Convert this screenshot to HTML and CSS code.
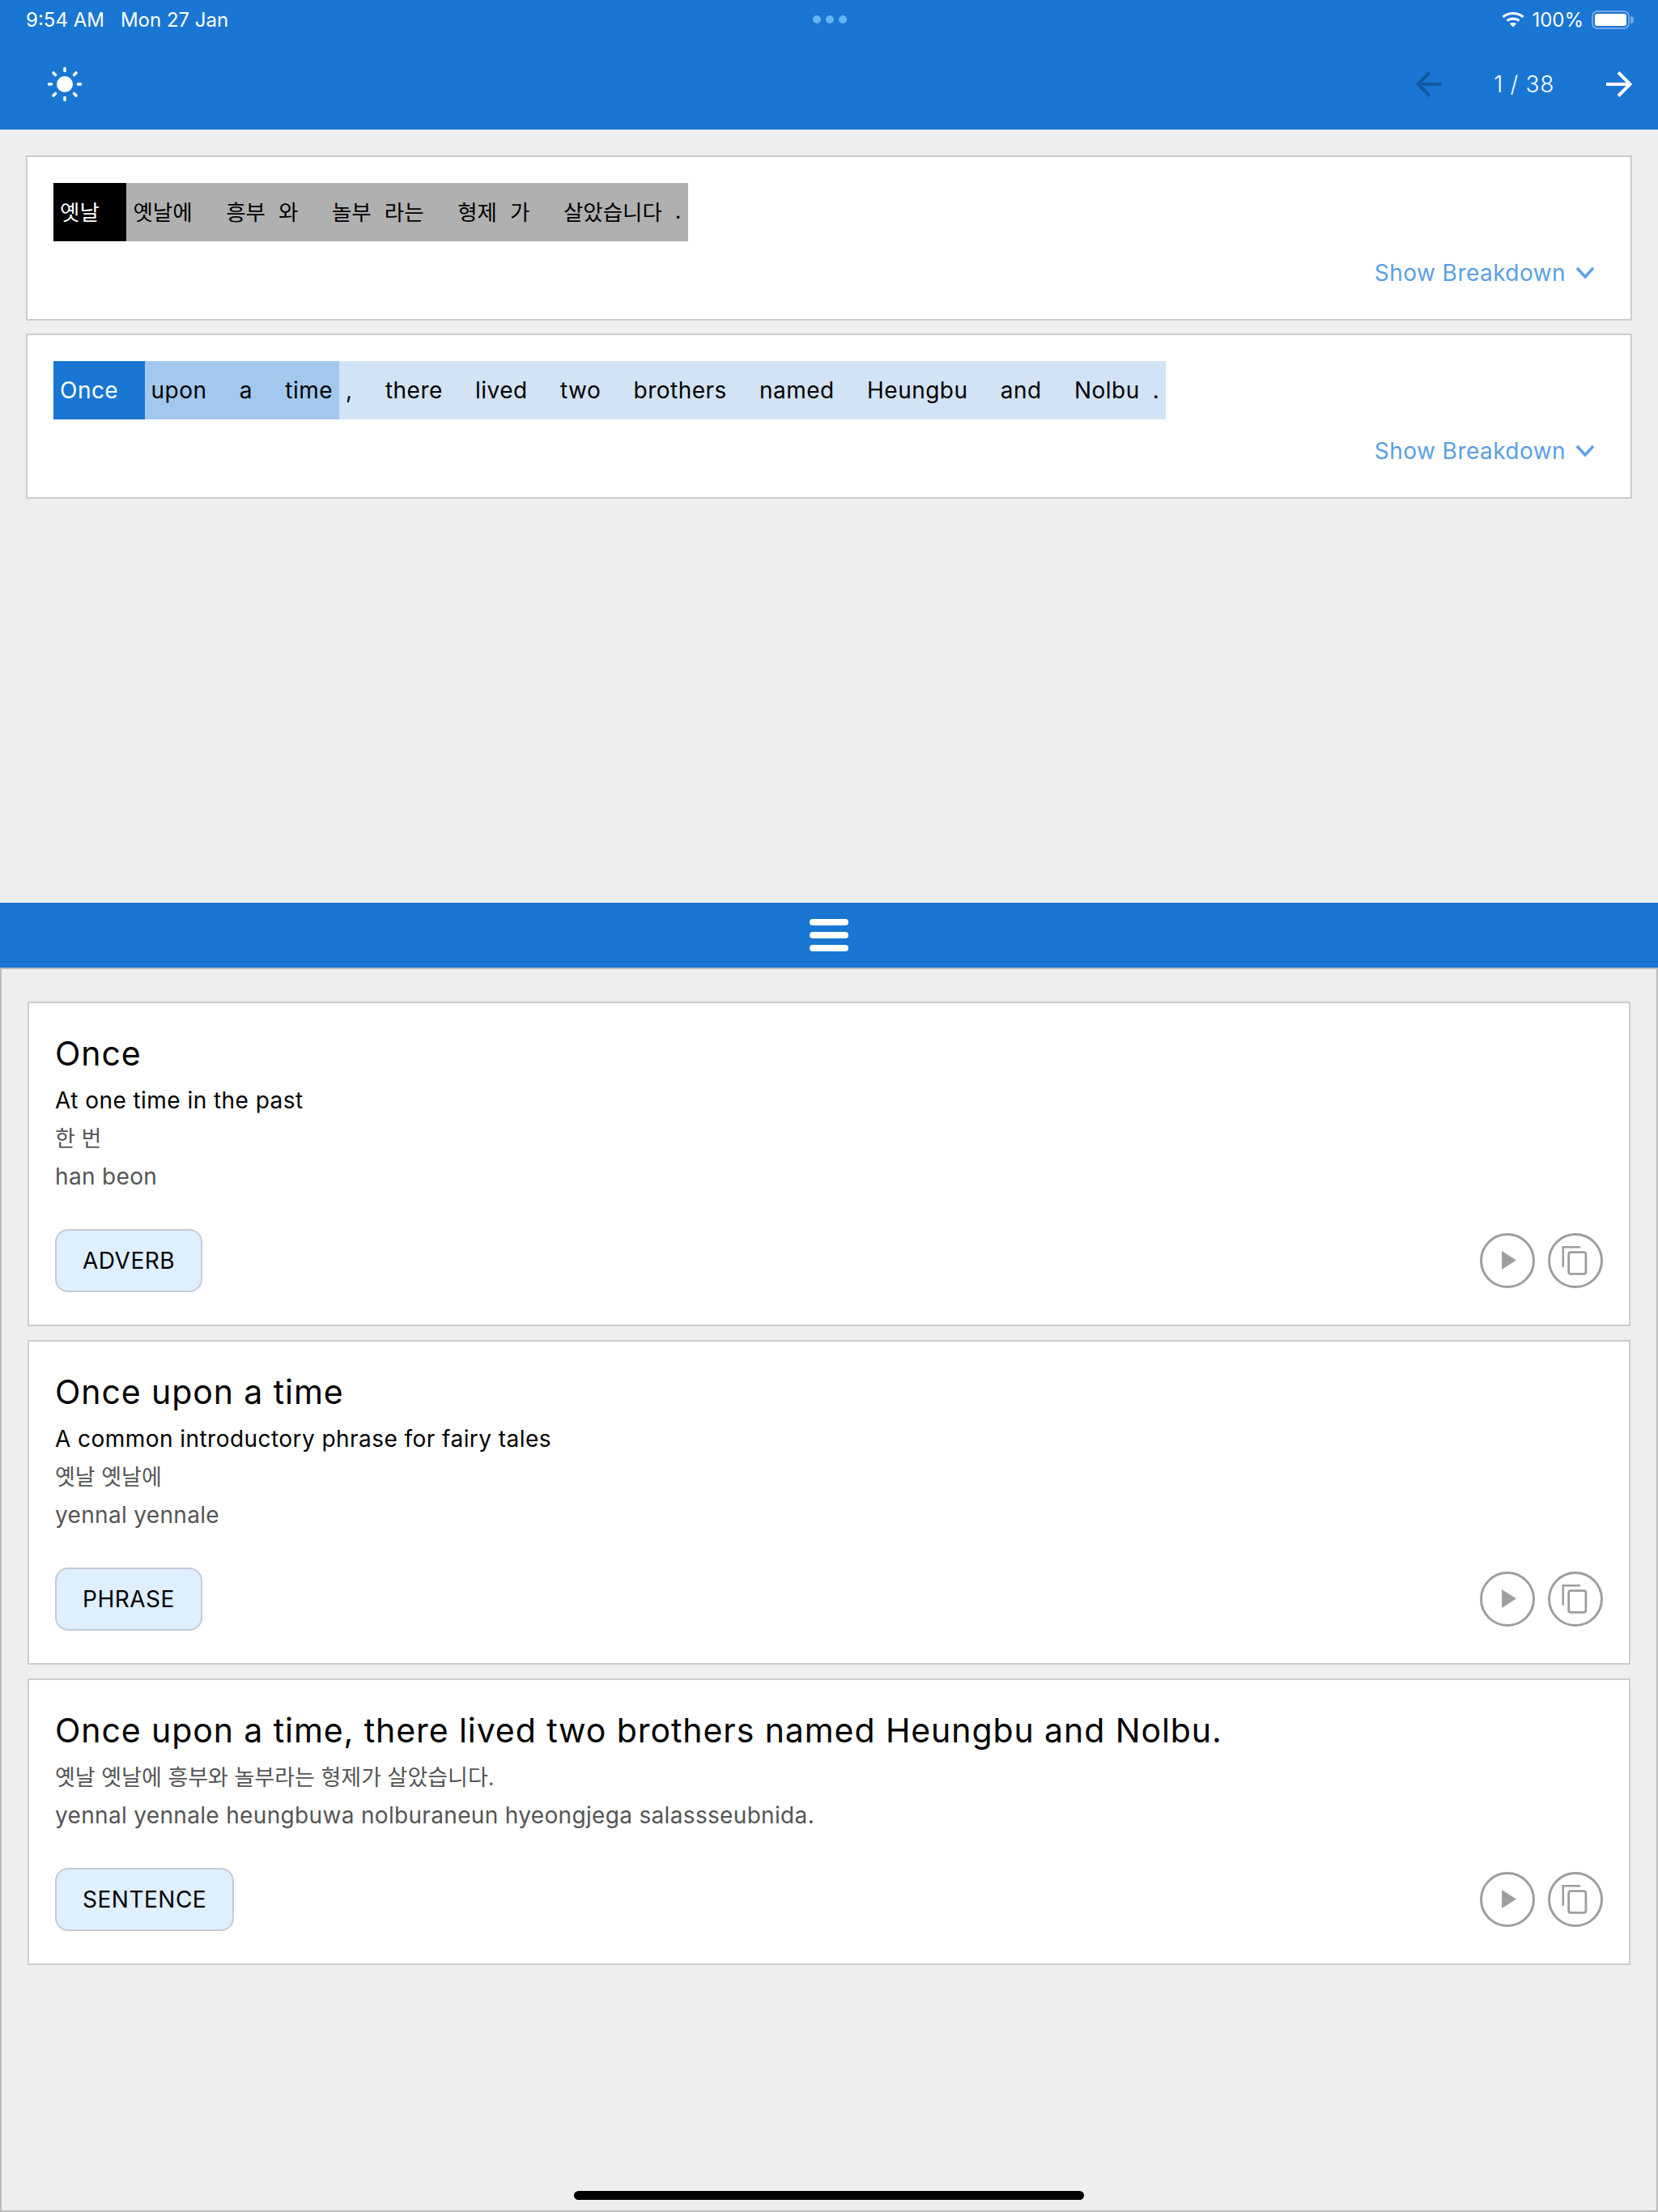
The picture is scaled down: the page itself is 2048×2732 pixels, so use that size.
FILE: index.html
```html
<!DOCTYPE html>
<html lang="ko">
<head>
    <meta charset="UTF-8">
    <title>Story Reader</title>
    <link rel="stylesheet" href="styles.css">
</head>
<body>
    <div class="app">
        <header class="header">
            <div class="status-bar">
                <div class="status-left">
                    <span>9:54 AM</span>
                    <span>Mon 27 Jan</span>
                </div>
                <div class="status-dots"><i></i><i></i><i></i></div>
                <div class="status-right">
                    <svg class="wifi" width="28" height="20" viewBox="0 0 28 20">
                        <path d="M1.5 7C8.500 1 19.500 1 26.500 7" fill="none" stroke="#fff" stroke-width="3.2"/>
                        <path d="M6.500 11.500C10.500 8.200 17.500 8.200 21.500 11.500" fill="none" stroke="#fff" stroke-width="3.2"/>
                        <path d="M10 15.200C12.200 13.600 15.800 13.600 18 15.200L14 19.500Z" fill="#fff"/>
                    </svg>
                    <span class="battery-text">100%</span>
                    <div class="battery"><div class="battery-level"></div></div>
                    <div class="battery-cap"></div>
                </div>
            </div>
            <div class="toolbar">
                <svg class="sun" width="44" height="44" viewBox="0 0 44 44">
                    <circle cx="22" cy="22" r="10" fill="#fff"/>
                    <g stroke="#fff" stroke-width="3.6" stroke-linecap="round">
                        <path d="M22 2.500V5.500M22 38.500V41.500M2.500 22H5.500M38.500 22H41.500"/>
                        <path d="M8 8L10.500 10.500M36 8L33.500 10.500M8 36L10.500 33.500M36 36L33.500 33.500"/>
                    </g>
                </svg>
                <div class="pager">
                    <svg width="32" height="32" viewBox="0 0 32 32">
                        <path d="M17 1.500L2.500 16L17 30.500M3 16H32" fill="none" stroke="#125aa0" stroke-width="4"/>
                    </svg>
                    <span class="pager-count">1 / 38</span>
                    <svg width="32" height="32" viewBox="0 0 32 32">
                        <path d="M15 1.500L29.500 16L15 30.500M29 16H0" fill="none" stroke="#fff" stroke-width="4"/>
                    </svg>
                </div>
            </div>
        </header>

        <section class="reader">
            <div class="sentence-card">
                <div class="tokens tokens-ko">
                    <div class="group group-black">
                        <span class="token">옛날</span><span class="token space"> </span>
                    </div>
                    <div class="group group-gray">
                        <span class="token">옛날에</span><span class="token space"> </span>
                        <span class="token">흥부</span><span class="token">와</span><span class="token space"> </span>
                        <span class="token">놀부</span><span class="token">라는</span><span class="token space"> </span>
                        <span class="token">형제</span><span class="token">가</span><span class="token space"> </span>
                        <span class="token">살았습니다</span><span class="token">.</span>
                    </div>
                </div>
                <div class="breakdown">
                    <span>Show Breakdown</span>
                    <svg width="24" height="16" viewBox="0 0 24 16"><path d="M2 2L12 13L22 2" fill="none" stroke="#5a9fe3" stroke-width="3.4"/></svg>
                </div>
            </div>
            <div class="sentence-card">
                <div class="tokens">
                    <div class="group group-blue">
                        <span class="token">Once</span><span class="token space"> </span>
                    </div>
                    <div class="group group-mid">
                        <span class="token">upon</span><span class="token space"> </span>
                        <span class="token">a</span><span class="token space"> </span>
                        <span class="token">time</span>
                    </div>
                    <div class="group group-light">
                        <span class="token">,</span><span class="token space"> </span>
                        <span class="token">there</span><span class="token space"> </span>
                        <span class="token">lived</span><span class="token space"> </span>
                        <span class="token">two</span><span class="token space"> </span>
                        <span class="token">brothers</span><span class="token space"> </span>
                        <span class="token">named</span><span class="token space"> </span>
                        <span class="token">Heungbu</span><span class="token space"> </span>
                        <span class="token">and</span><span class="token space"> </span>
                        <span class="token">Nolbu</span><span class="token">.</span>
                    </div>
                </div>
                <div class="breakdown">
                    <span>Show Breakdown</span>
                    <svg width="24" height="16" viewBox="0 0 24 16"><path d="M2 2L12 13L22 2" fill="none" stroke="#5a9fe3" stroke-width="3.4"/></svg>
                </div>
            </div>
        </section>

        <div class="splitter">
            <div class="grip"><i></i><i></i><i></i></div>
        </div>

        <section class="details">
            <article class="entry">
                <h2>Once</h2>
                <p class="meaning">At one time in the past</p>
                <p class="sub ko">한 번</p>
                <p class="sub">han beon</p>
                <div class="entry-foot">
                    <span class="tag">ADVERB</span>
                    <div class="actions">
                        <button class="round-btn"><svg width="62" height="62" viewBox="0 0 62 62"><path d="M24 19L42 30.500L24 42Z" fill="#9e9e9e"/></svg></button>
                        <button class="round-btn"><svg width="62" height="62" viewBox="0 0 62 62"><path d="M15.750 38.700V14.200H37" fill="none" stroke="#9e9e9e" stroke-width="2.600"/><rect x="22.700" y="20.700" width="21.200" height="26.600" rx="2.500" fill="none" stroke="#9e9e9e" stroke-width="2.800"/></svg></button>
                    </div>
                </div>
            </article>
            <article class="entry">
                <h2>Once upon a time</h2>
                <p class="meaning">A common introductory phrase for fairy tales</p>
                <p class="sub ko">옛날 옛날에</p>
                <p class="sub">yennal yennale</p>
                <div class="entry-foot">
                    <span class="tag">PHRASE</span>
                    <div class="actions">
                        <button class="round-btn"><svg width="62" height="62" viewBox="0 0 62 62"><path d="M24 19L42 30.500L24 42Z" fill="#9e9e9e"/></svg></button>
                        <button class="round-btn"><svg width="62" height="62" viewBox="0 0 62 62"><path d="M15.750 38.700V14.200H37" fill="none" stroke="#9e9e9e" stroke-width="2.600"/><rect x="22.700" y="20.700" width="21.200" height="26.600" rx="2.500" fill="none" stroke="#9e9e9e" stroke-width="2.800"/></svg></button>
                    </div>
                </div>
            </article>
            <article class="entry">
                <h2>Once upon a time, there lived two brothers named Heungbu and Nolbu.</h2>
                <p class="sub ko">옛날 옛날에 흥부와 놀부라는 형제가 살았습니다.</p>
                <p class="sub">yennal yennale heungbuwa nolburaneun hyeongjega salassseubnida.</p>
                <div class="entry-foot">
                    <span class="tag">SENTENCE</span>
                    <div class="actions">
                        <button class="round-btn"><svg width="62" height="62" viewBox="0 0 62 62"><path d="M24 19L42 30.500L24 42Z" fill="#9e9e9e"/></svg></button>
                        <button class="round-btn"><svg width="62" height="62" viewBox="0 0 62 62"><path d="M15.750 38.700V14.200H37" fill="none" stroke="#9e9e9e" stroke-width="2.600"/><rect x="22.700" y="20.700" width="21.200" height="26.600" rx="2.500" fill="none" stroke="#9e9e9e" stroke-width="2.800"/></svg></button>
                    </div>
                </div>
            </article>
            <div class="home-bar"></div>
        </section>
    </div>
</body>
</html>
```

FILE: styles.css
```css
* {
    box-sizing: border-box;
}
html, body {
    margin: 0;
    padding: 0;
}
body {
    font-family: Inter, "Noto Sans CJK KR", sans-serif;
    background-color: #eee;
    color: #000;
}
.app {
    width: 2048px;
    height: 2732px;
    display: flex;
    flex-direction: column;
    overflow: hidden;
}

/* top bar */
.header {
    height: 160px;
    background-color: #1976d2;
    color: #fff;
}
.status-bar {
    height: 48px;
    padding: 0 30px 0 32px;
    display: flex;
    align-items: center;
    justify-content: space-between;
    font-size: 24px;
}
.status-left {
    width: 400px;
    display: flex;
    gap: 20px;
}
.status-dots {
    display: flex;
    gap: 6px;
}
.status-dots i {
    width: 10px;
    height: 10px;
    border-radius: 50%;
    background-color: #64b5f6;
}
.status-right {
    width: 400px;
    display: flex;
    align-items: center;
    justify-content: flex-end;
}
.battery-text {
    margin: 0 10px 0 9px;
}
.battery {
    width: 47px;
    height: 23px;
    border: 2px solid #76a8e6;
    border-radius: 7px;
    padding: 2px;
}
.battery-level {
    height: 100%;
    background-color: #fff;
    border-radius: 3px;
}
.battery-cap {
    width: 4px;
    height: 9px;
    margin-left: 1px;
    background-color: #76a8e6;
    border-radius: 0 4px 4px 0;
}
.toolbar {
    height: 112px;
    padding: 0 32px 0 58px;
    display: flex;
    align-items: center;
    justify-content: space-between;
}
.pager {
    display: flex;
    align-items: center;
    gap: 64px;
}
.pager-count {
    font-size: 28px;
    font-weight: 300;
    letter-spacing: 0.7px;
}

/* sentence panel */
.reader {
    flex: 1;
    padding: 32px;
    display: flex;
    flex-direction: column;
    gap: 16px;
}
.sentence-card {
    height: 204px;
    background-color: #fff;
    border: 2px solid #ccc;
    padding: 32px;
}
.tokens {
    display: flex;
    height: 72px;
    width: fit-content;
    font-size: 28px;
    letter-spacing: 0.47px;
}
.tokens-ko {
    font-size: 26.500px;
    letter-spacing: 0;
}
.tokens-ko .token {
    margin-bottom: 4px;
}
.tokens-ko .space {
    padding: 0 9.100px;
}
.group {
    display: flex;
    align-items: center;
}
.token {
    padding: 0 8px;
    white-space: pre;
}
.group-black {
    background-color: #000;
    color: #fff;
}
.group-gray {
    background-color: #b0b0b0;
}
.group-blue {
    background-color: #1976d2;
    color: #fff;
}
.group-mid {
    background-color: #a3c8ed;
}
.group-light {
    background-color: #d1e3f5;
}
.breakdown {
    margin-top: 22px;
    padding-right: 12px;
    display: flex;
    justify-content: flex-end;
    align-items: center;
    gap: 12px;
    font-size: 28px;
    letter-spacing: 0.45px;
    color: #5a9fe3;
}

/* drag handle */
.splitter {
    height: 80px;
    background-color: #1976d2;
    display: flex;
    align-items: center;
    justify-content: center;
}
.grip {
    display: flex;
    flex-direction: column;
    gap: 8px;
}
.grip i {
    display: block;
    width: 48px;
    height: 8px;
    border-radius: 4px;
    background-color: #fff;
}

/* word details */
.details {
    position: relative;
    height: 1537px;
    border: 2px solid #bbb;
    padding: 40px 32px 0;
    display: flex;
    flex-direction: column;
    gap: 17px;
}
.entry {
    background-color: #fff;
    border: 2px solid #ccc;
    padding: 32px 32px 40px;
}
.entry h2 {
    margin: 0 0 5px;
    font-size: 41px;
    font-weight: 400;
    line-height: 60px;
    letter-spacing: 0.92px;
}
.entry p {
    margin: 0;
    font-size: 28px;
    line-height: 47px;
    letter-spacing: 0.45px;
}
.entry .sub {
    color: #555;
    letter-spacing: 0.33px;
}
.entry .ko {
    font-size: 27px;
    letter-spacing: 0;
}
.entry-foot {
    margin-top: 41px;
    display: flex;
    align-items: center;
    justify-content: space-between;
}
.tag {
    height: 78px;
    padding: 0 32px;
    display: flex;
    align-items: center;
    background-color: #deefff;
    border: 2px solid #c4cbd8;
    border-radius: 16px;
    font-size: 28px;
    letter-spacing: 0.5px;
}
.actions {
    display: flex;
    gap: 16px;
}
.round-btn {
    width: 68px;
    height: 68px;
    padding: 0;
    background: none;
    border: 3px solid #9e9e9e;
    border-radius: 50%;
    display: flex;
    align-items: center;
    justify-content: center;
}
.home-bar {
    position: absolute;
    left: 707px;
    bottom: 13px;
    width: 630px;
    height: 11px;
    border-radius: 6px;
    background-color: #000;
}
```
